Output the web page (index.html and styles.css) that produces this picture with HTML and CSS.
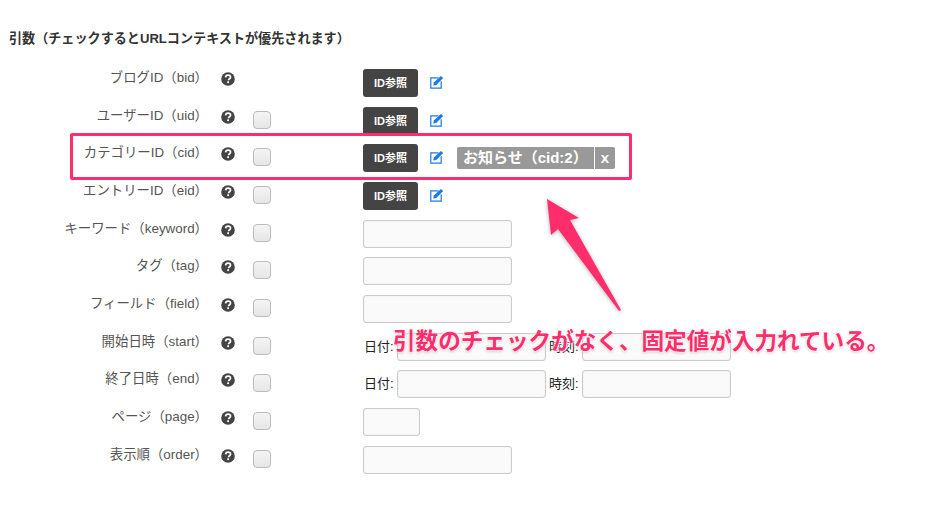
FILE: index.html
```html
<!DOCTYPE html>
<html lang="ja">
<head>
<meta charset="utf-8">
<title>引数</title>
<link rel="stylesheet" href="styles.css">
</head>
<body>
<svg width="0" height="0" class="defs">
  <symbol id="help" viewBox="0 0 14 14">
    <circle cx="7" cy="7" r="6.8" fill="#444"/>
    <path d="M4.6 5.4C4.7 4 5.7 3.2 7.1 3.2c1.4 0 2.4.8 2.4 2 0 1-.6 1.4-1.2 1.8-.6.4-.7.6-.7 1.3" fill="none" stroke="#fff" stroke-width="1.7"/>
    <rect x="6.2" y="9.3" width="1.8" height="1.8" fill="#fff"/>
  </symbol>
  <symbol id="edit" viewBox="0 0 14 14">
    <path d="M8.5 2.8H.8v10.4h10.4V6.2" fill="none" stroke="#1a7be8" stroke-width="1.2"/>
    <path d="M3.8 7.6 10.9.9l2.3 2.2-7 6.9-2.9.6z" fill="#1a7be8"/>
  </symbol>
</svg>
<main class="page">
  <h2 class="heading">引数（チェックするとURLコンテキストが優先されます）</h2>
  <div class="form">
    <div class="row">
      <span class="label">ブログID（bid）</span>
      <svg class="help"><use href="#help"/></svg>
      <span class="check-slot"></span>
      <div class="control"><button class="btn">ID参照</button><svg class="edit"><use href="#edit"/></svg></div>
    </div>
    <div class="row">
      <span class="label">ユーザーID（uid）</span>
      <svg class="help"><use href="#help"/></svg>
      <span class="check-slot"><span class="check"></span></span>
      <div class="control"><button class="btn">ID参照</button><svg class="edit"><use href="#edit"/></svg></div>
    </div>
    <div class="row">
      <span class="label">カテゴリーID（cid）</span>
      <svg class="help"><use href="#help"/></svg>
      <span class="check-slot"><span class="check"></span></span>
      <div class="control"><button class="btn">ID参照</button><svg class="edit"><use href="#edit"/></svg>
        <span class="tag"><span class="tag-name">お知らせ（cid:2）</span><span class="tag-x">x</span></span>
      </div>
    </div>
    <div class="row">
      <span class="label">エントリーID（eid）</span>
      <svg class="help"><use href="#help"/></svg>
      <span class="check-slot"><span class="check"></span></span>
      <div class="control"><button class="btn">ID参照</button><svg class="edit"><use href="#edit"/></svg></div>
    </div>
    <div class="row">
      <span class="label">キーワード（keyword）</span>
      <svg class="help"><use href="#help"/></svg>
      <span class="check-slot"><span class="check"></span></span>
      <div class="control"><input class="input wide" type="text"></div>
    </div>
    <div class="row">
      <span class="label">タグ（tag）</span>
      <svg class="help"><use href="#help"/></svg>
      <span class="check-slot"><span class="check"></span></span>
      <div class="control"><input class="input wide" type="text"></div>
    </div>
    <div class="row">
      <span class="label">フィールド（field）</span>
      <svg class="help"><use href="#help"/></svg>
      <span class="check-slot"><span class="check"></span></span>
      <div class="control"><input class="input wide" type="text"></div>
    </div>
    <div class="row">
      <span class="label">開始日時（start）</span>
      <svg class="help"><use href="#help"/></svg>
      <span class="check-slot"><span class="check"></span></span>
      <div class="control dates"><span class="unit">日付:</span><input class="input wide" type="text"><span class="unit">時刻:</span><input class="input wide" type="text"></div>
    </div>
    <div class="row">
      <span class="label">終了日時（end）</span>
      <svg class="help"><use href="#help"/></svg>
      <span class="check-slot"><span class="check"></span></span>
      <div class="control dates"><span class="unit">日付:</span><input class="input wide" type="text"><span class="unit">時刻:</span><input class="input wide" type="text"></div>
    </div>
    <div class="row">
      <span class="label">ページ（page）</span>
      <svg class="help"><use href="#help"/></svg>
      <span class="check-slot"><span class="check"></span></span>
      <div class="control"><input class="input small" type="text"></div>
    </div>
    <div class="row">
      <span class="label">表示順（order）</span>
      <svg class="help"><use href="#help"/></svg>
      <span class="check-slot"><span class="check"></span></span>
      <div class="control"><input class="input wide" type="text"></div>
    </div>
  </div>
  <div class="highlight"></div>
  <svg class="arrow" viewBox="0 0 100 130" width="100" height="130">
    <path d="M7 9 39 28 30 30 81 120 79 121 18 39 11 45z" fill="#ff2d6b"/>
  </svg>
  <p class="note">引数のチェックがなく、固定値が入力れている。</p>
</main>
</body>
</html>
```

FILE: styles.css
```css
* { box-sizing: border-box; }
html, body { margin: 0; padding: 0; background: #fff; }
body {
  width: 940px;
  height: 513px;
  overflow: hidden;
  font-family: "Liberation Sans", "Noto Sans CJK JP", sans-serif;
  color: #333;
}
.defs { position: absolute; }
.page { position: relative; width: 940px; height: 513px; padding: 30px 0 0 9px; }
.heading {
  margin: 0;
  height: 17px;
  font-size: 13.1px;
  line-height: 17px;
  font-weight: 700;
  color: #333;
}
.form { margin: 22px 0 0 -9px; }
.row {
  display: grid;
  grid-template-columns: 208px 14px 18px 1fr;
  column-gap: 0;
  height: 37.68px;
  align-items: start;
}
.label {
  font-size: 13.4px;
  line-height: 17px;
  text-align: right;
  color: #555;
  white-space: nowrap;
}
.help { width: 14px; height: 14px; margin: 3px 0 0 13px; overflow: visible; }
.check-slot { display: block; margin-left: 31px; width: 18px; }
.check {
  display: block;
  width: 18px;
  height: 18px;
  margin-top: 4px;
  border: 1px solid #bbb;
  border-radius: 4px;
  background: linear-gradient(#f4f4f4, #e6e6e6);
}
.control { display: flex; align-items: flex-start; margin-left: 123px; white-space: nowrap; }
.btn {
  width: 55px;
  height: 28px;
  padding: 0;
  border: 0;
  border-radius: 3px;
  background: #444;
  color: #fff;
  font: 700 11px/28px "Liberation Sans", "Noto Sans CJK JP", sans-serif;
}
.edit { width: 14px; height: 14px; margin: 6px 0 0 12px; }
.tag { display: flex; margin: 3px 0 0 13px; height: 22px; color: #fff; font-size: 15px; font-weight: 700; line-height: 21px; }
.tag-name { width: 137px; padding-left: 6px; background: #999; border-radius: 2px 0 0 2px; }
.tag-x { width: 20px; margin-left: 1px; text-align: center; background: #999; border-radius: 0 2px 2px 0; }
.input {
  height: 28px;
  padding: 0 6px;
  border: 1px solid #ccc;
  border-radius: 3px;
  background: #fafafa;
  box-shadow: inset 0 0 1px #ccc;
}
.wide { width: 149px; }
.small { width: 57px; }
.unit { font-size: 13px; line-height: 28px; color: #222; width: 34px; padding-left: 1px; }
.dates .wide + .unit { width: 36px; padding-left: 3px; }
.highlight {
  position: absolute;
  left: 70px;
  top: 133px;
  width: 562px;
  height: 47px;
  border: 3px solid #ff2d6b;
  border-radius: 2px;
}
.arrow {
  position: absolute;
  left: 540px;
  top: 190px;
  filter: drop-shadow(0 1px 2px rgba(0,0,0,.3));
}
.note {
  position: absolute;
  left: 393px;
  top: 325px;
  margin: 0;
  font-size: 22.6px;
  line-height: 34px;
  font-weight: 700;
  color: #ff2d6b;
  white-space: nowrap;
  text-shadow: 0 0 2px #fff, 0 0 2px #fff, 0 0 3px #fff, 0 1px 3px rgba(0,0,0,.35);
}
```
